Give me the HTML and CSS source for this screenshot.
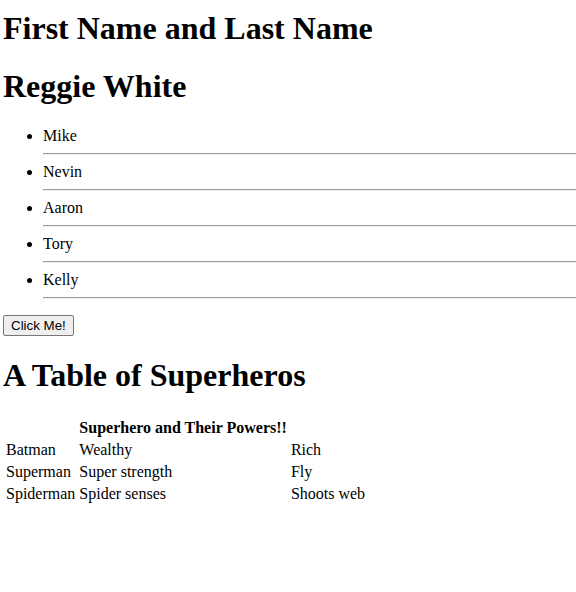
FILE: index.html
```html
<!DOCTYPE html>
<html>
<head>
<meta charset="utf-8">
<title>Superheros</title>
<link rel="stylesheet" href="styles.css">
</head>
<body>
<h1 class="title-first">First Name and Last Name</h1>
<h1>Reggie White</h1>
<ul class="names">
<li>Mike<hr></li>
<li>Nevin<hr></li>
<li>Aaron<hr></li>
<li>Tory<hr></li>
<li>Kelly<hr></li>
</ul>
<button class="btn" type="button">Click Me!</button>
<h1>A Table of Superheros</h1>
<table class="heroes">
<tr><th></th><th>Superhero and Their Powers!!</th></tr>
<tr><td>Batman</td><td>Wealthy</td><td>Rich</td></tr>
<tr><td>Superman</td><td>Super strength</td><td>Fly</td></tr>
<tr><td>Spiderman</td><td>Spider senses</td><td>Shoots web</td></tr>
</table>
</body>
</html>
```
FILE: styles.css
```css
body {
  margin: 10px 0 8px 3px;
  font-family: "Liberation Serif", "Times New Roman", serif;
  color: #000;
  background: #fff;
}
h1 {
  font-size: 32px;
  margin: 21.44px 0;
}
.title-first {
  margin-top: 0;
}
.names {
  margin: 16px 0;
  padding-left: 40px;
}
.names hr {
  margin: 8px 0;
  height: 0;
  border: 0;
  border-top: 1px solid #9a9a9a;
  border-bottom: 1px solid #eeeeee;
}
.btn {
  display: block;
  font-family: Arial, "Liberation Sans", sans-serif;
  font-size: 13.333px;
  line-height: 17px;
  padding: 1px 7px;
  background: #efefef;
  border: 1px solid #767676;
  border-radius: 2px;
  color: #000;
}
.heroes {
  border-spacing: 2px;
}
.heroes td, .heroes th {
  padding: 1px;
  text-align: left;
}
```
